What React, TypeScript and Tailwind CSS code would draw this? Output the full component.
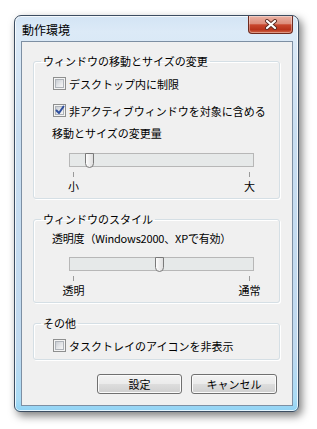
import React from "react";

const FONT = { fontFamily: '"Noto Sans CJK JP", "Noto Sans", sans-serif' };

function Check({ checked }: { checked?: boolean }) {
  return (
    <div className="w-[13px] h-[13px] shrink-0 border border-[#8e8f8f] bg-[#f4f4f4] p-[1px]">
      <div className="relative w-full h-full border border-[#aeb3b9] bg-[linear-gradient(135deg,#c9cdd3_0%,#e2e4e7_50%,#f7f7f7_100%)]">
        {checked && (
          <svg className="absolute left-[-2px] top-[-3px]" width="12" height="12" viewBox="0 0 12 12">
            <path d="M2.5 6.5 L5 9 L9.5 2.5" fill="none" stroke="#2f4f9e" strokeWidth="2" strokeLinecap="round" strokeLinejoin="round" />
          </svg>
        )}
      </div>
    </div>
  );
}

function CheckRow({ checked, label, className }: { checked?: boolean; label: string; className?: string }) {
  return (
    <div className={"flex items-center gap-[3px] h-[13px] pl-[19px] " + (className ?? "")}>
      <Check checked={checked} />
      <span className="text-[11px] leading-[14px] whitespace-nowrap">{label}</span>
    </div>
  );
}

function Slider({ thumb, left, right }: { thumb: number; left: string; right: string }) {
  return (
    <div className="ml-[35px] w-[185px]">
      <div className="relative h-[14px] border border-[#b7b7b7] bg-[#e6e9e9]">
        <svg className="absolute top-[-1px]" style={{ left: thumb - 1 }} width="9" height="15" viewBox="0 0 9 15">
          <defs>
            <linearGradient id={"tg" + thumb} x1="0" y1="0" x2="1" y2="0">
              <stop offset="0" stopColor="#ffffff" />
              <stop offset="1" stopColor="#dcdcdc" />
            </linearGradient>
          </defs>
          <path d="M0.5 0.5 H8.5 V10.5 Q8.5 14.5 4.5 14.5 Q0.5 14.5 0.5 10.5 Z" fill={"url(#tg" + thumb + ")"} stroke="#7a7a7a" />
        </svg>
      </div>
      <div className="mt-[5px] px-[4px] flex justify-between">
        <div className="w-px h-[5px] bg-[#9a9a9a]" />
        <div className="w-px h-[5px] bg-[#9a9a9a]" />
      </div>
      <div className="mt-[2px] px-[4px] flex justify-between text-[11px] leading-[14px]">
        <div className="w-px flex justify-center">
          <span className="whitespace-nowrap">{left}</span>
        </div>
        <div className="w-px flex justify-center">
          <span className="whitespace-nowrap">{right}</span>
        </div>
      </div>
    </div>
  );
}

function Group({ title, className, children }: { title: string; className?: string; children: React.ReactNode }) {
  return (
    <fieldset
      className={
        "ml-[11px] w-[247px] rounded-[3px] border border-[#d5dfe5] shadow-[inset_1px_1px_0_#ffffff,1px_1px_0_#ffffff] " +
        (className ?? "")
      }
    >
      <legend className="ml-[7px] px-[2px] text-[11px] leading-[14px] whitespace-nowrap">{title}</legend>
      {children}
    </fieldset>
  );
}

function Button({ label, w }: { label: string; w: string }) {
  return (
    <button
      className={
        w +
        " h-[20px] rounded-[3px] border border-[#707070] bg-[linear-gradient(180deg,#f3f3f3_0%,#ebebeb_48%,#dddddd_52%,#cfcfcf_100%)] shadow-[inset_0_0_0_1px_#fbfbfb] text-[11px] leading-[14px] text-black"
      }
    >
      {label}
    </button>
  );
}

export default function App() {
  return (
    <div className="w-[317px] h-[429px] bg-white overflow-hidden text-black" style={FONT}>
      <div className="ml-[14px] mt-[15px] w-[285px] h-[397px] flex flex-col rounded-t-[7px] rounded-b-[6px] border border-[#3c4d61] bg-[linear-gradient(180deg,#d3e4f4_0%,#dceaf7_4%,#c9def1_30%,#c0d9ef_85%,#a9dbf5_97%,#8fd3f5_100%)] shadow-[inset_0_0_0_1px_rgba(255,255,255,0.75),3px_4px_9px_rgba(0,0,0,0.5)]">
        <div className="h-[25px] shrink-0 flex items-start justify-between pl-[7px] pr-[5px]">
          <span className="mt-[6px] text-[12px] leading-[15px]">動作環境</span>
          <div className="w-[45px] h-[18px] flex items-center justify-center rounded-b-[4px] border border-t-0 border-[#6e2a1e] bg-[linear-gradient(180deg,#eab1a3_0%,#dd8d7b_45%,#c8472e_52%,#b8331b_80%,#d2694b_100%)] shadow-[inset_0_0_0_1px_rgba(255,255,255,0.35)]">
            <svg width="14" height="11" viewBox="0 0 14 11">
              <path d="M3 2 L11 9 M11 2 L3 9" stroke="#5a2a22" strokeWidth="4" strokeLinecap="round" />
              <path d="M3 2 L11 9 M11 2 L3 9" stroke="#ffffff" strokeWidth="2.2" strokeLinecap="round" />
            </svg>
          </div>
        </div>
        <div className="ml-[6px] mr-[5px] mb-[5px] flex-1 border border-[#7d8fa3] bg-[#f0f0f0] pt-[12px]">
          <Group title="ウィンドウの移動とサイズの変更" className="pb-[5px]">
            <CheckRow label="デスクトップ内に制限" className="mt-[9px]" />
            <CheckRow checked label="非アクティブウィンドウを対象に含める" className="mt-[14px]" />
            <div className="mt-[9px] pl-[18px] text-[11px] leading-[14px]">移動とサイズの変更量</div>
            <div className="mt-[13px]">
              <Slider thumb={16} left="小" right="大" />
            </div>
          </Group>
          <Group title="ウィンドウのスタイル" className="mt-[13px] pb-[5px]">
            <div className="mt-[5px] pl-[18px] text-[11px] leading-[14px] whitespace-nowrap tracking-[-0.2px]">透明度（Windows2000、XPで有効）</div>
            <div className="mt-[12px]">
              <Slider thumb={86} left="透明" right="通常" />
            </div>
          </Group>
          <Group title="その他" className="mt-[13px] pb-[7px]">
            <CheckRow label="タスクトレイのアイコンを非表示" className="mt-[9px]" />
          </Group>
          <div className="mt-[14px] pr-[15px] flex justify-end gap-[9px]">
            <Button label="設定" w="w-[85px]" />
            <Button label="キャンセル" w="w-[86px]" />
          </div>
        </div>
      </div>
    </div>
  );
}
